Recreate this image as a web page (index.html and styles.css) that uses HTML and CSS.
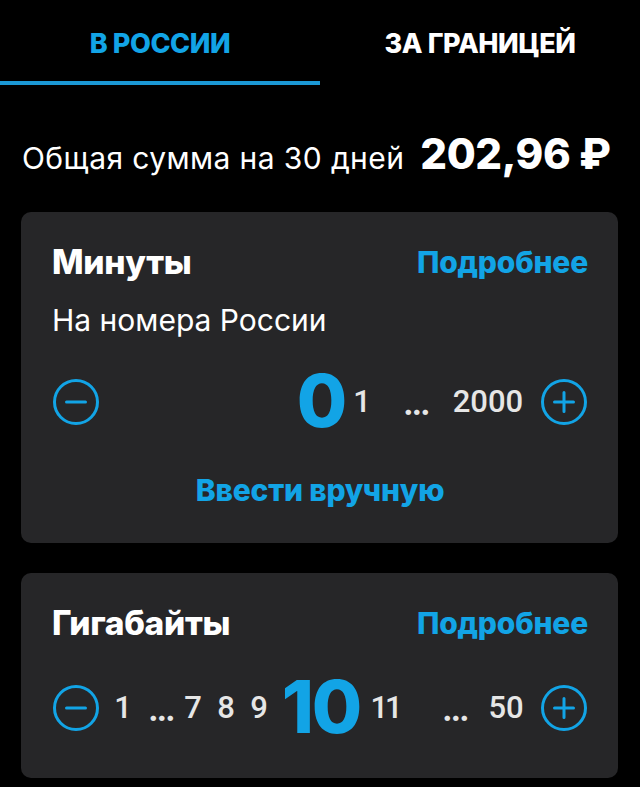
FILE: index.html
```html
<!DOCTYPE html>
<html lang="ru">
<head>
<meta charset="utf-8">
<title>Тариф</title>
<link rel="stylesheet" href="styles.css">
</head>
<body>
<div class="tabs">
  <div class="tab tab-active">В РОССИИ</div>
  <div class="tab">ЗА ГРАНИЦЕЙ</div>
</div>
<div class="total">
  <span class="total-label">Общая сумма на 30 дней</span>
  <span class="total-sum">202,96 ₽</span>
</div>
<section class="card card-minutes">
  <div class="card-head">
    <span class="card-title">Минуты</span>
    <span class="card-link">Подробнее</span>
  </div>
  <div class="card-sub">На номера России</div>
  <div class="picker picker-minutes">
    <span class="btn"><svg viewBox="0 0 48 48" width="48" height="48"><circle cx="24" cy="24" r="21.5" fill="none" stroke="#12a4e6" stroke-width="3"/><path d="M14.5 24h19" stroke="#12a4e6" stroke-width="3" stroke-linecap="round"/></svg></span>
    <span></span>
    <span class="val val-big">0</span>
    <span class="val">1</span>
    <span class="val val-dots">...</span>
    <span class="val">2000</span>
    <span></span>
    <span class="btn"><svg viewBox="0 0 48 48" width="48" height="48"><circle cx="24" cy="24" r="21.5" fill="none" stroke="#12a4e6" stroke-width="3"/><path d="M14.5 24h19M24 14.5v19" stroke="#12a4e6" stroke-width="3" stroke-linecap="round"/></svg></span>
  </div>
  <div class="manual">Ввести вручную</div>
</section>
<section class="card card-gb">
  <div class="card-head">
    <span class="card-title">Гигабайты</span>
    <span class="card-link">Подробнее</span>
  </div>
  <div class="picker picker-gb">
    <span class="btn"><svg viewBox="0 0 48 48" width="48" height="48"><circle cx="24" cy="24" r="21.5" fill="none" stroke="#12a4e6" stroke-width="3"/><path d="M14.5 24h19" stroke="#12a4e6" stroke-width="3" stroke-linecap="round"/></svg></span>
    <span class="val">1</span>
    <span class="val val-dots">...</span>
    <span class="val">7</span>
    <span class="val">8</span>
    <span class="val">9</span>
    <span class="val val-big">10</span>
    <span class="val val-tight">11</span>
    <span></span>
    <span class="val val-dots">...</span>
    <span class="val">50</span>
    <span></span>
    <span class="btn"><svg viewBox="0 0 48 48" width="48" height="48"><circle cx="24" cy="24" r="21.5" fill="none" stroke="#12a4e6" stroke-width="3"/><path d="M14.5 24h19M24 14.5v19" stroke="#12a4e6" stroke-width="3" stroke-linecap="round"/></svg></span>
  </div>
</section>
</body>
</html>
```
FILE: styles.css
```css
* { box-sizing: border-box; }
html, body { margin: 0; padding: 0; }
body {
  background: #000;
  color: #fff;
  font-family: Inter, "Noto Sans", sans-serif;
  width: 640px;
  height: 787px;
  overflow: hidden;
}
.tabs {
  display: flex;
  height: 85px;
}
.tab {
  flex: 1;
  display: flex;
  align-items: center;
  justify-content: center;
  padding-top: 6px;
  border-bottom: 4px solid transparent;
  font-size: 27px;
  font-weight: 800;
  letter-spacing: -0.4px;
  color: #fff;
}
.tab-active {
  color: #12a4e6;
  border-bottom-color: #1b98d5;
}
.total {
  display: flex;
  align-items: baseline;
  padding: 42px 22px 0;
  height: 127px;
  line-height: 54px;
}
.total-label {
  font-size: 30px;
  font-weight: 400;
  letter-spacing: 0.4px;
}
.total-sum {
  margin-left: 16px;
  font-size: 42px;
  font-weight: 800;
  letter-spacing: -0.4px;
}
.card {
  margin: 0 22px 30px 21px;
  background: #262628;
  border-radius: 10px;
  padding: 30px 30px 0 31px;
}
.card-minutes { height: 331px; }
.card-gb { height: 205px; }
.card-head {
  display: flex;
  justify-content: space-between;
  align-items: center;
  height: 40px;
}
.card-title {
  font-size: 33.5px;
  font-weight: 800;
  letter-spacing: -0.3px;
}
.card-link {
  font-size: 30px;
  font-weight: 800;
  color: #12a4e6;
  letter-spacing: -0.2px;
}
.card-sub {
  margin-top: 18px;
  line-height: 40px;
  font-size: 30px;
  font-weight: 400;
}
.picker {
  display: grid;
  align-items: center;
  justify-items: center;
  height: 60px;
}
.picker-minutes {
  margin-top: 32px;
  grid-template-columns: 48px 1fr 42px 40px 68px 76px 14px 48px;
}
.picker-gb {
  margin-top: 35px;
  grid-template-columns: 48px 46px 30px 34px 32px 34px 90px 38px 26px 50px 52px 1fr 48px;
}
.btn { display: flex; width: 48px; height: 48px; }
.val {
  font-family: Roboto, "Liberation Sans", sans-serif;
  font-size: 31px;
  font-weight: 500;
  color: #e6e6e6;
  line-height: 60px;
  height: 60px;
}
.val-tight { letter-spacing: -3px; }
.val-big {
  font-family: Inter, "Noto Sans", sans-serif;
  font-size: 73px;
  font-weight: 800;
  color: #12a4e6;
  letter-spacing: -2px;
  line-height: 58px;
}
.val-dots {
  font-family: Inter, "Noto Sans", sans-serif;
  font-size: 27px;
  font-weight: 900;
  letter-spacing: -1.5px;
  padding-top: 8px;
  line-height: 52px;
}
.manual {
  margin-top: 38px;
  line-height: 40px;
  text-align: center;
  font-size: 30px;
  font-weight: 800;
  color: #12a4e6;
  letter-spacing: -0.2px;
}
```
